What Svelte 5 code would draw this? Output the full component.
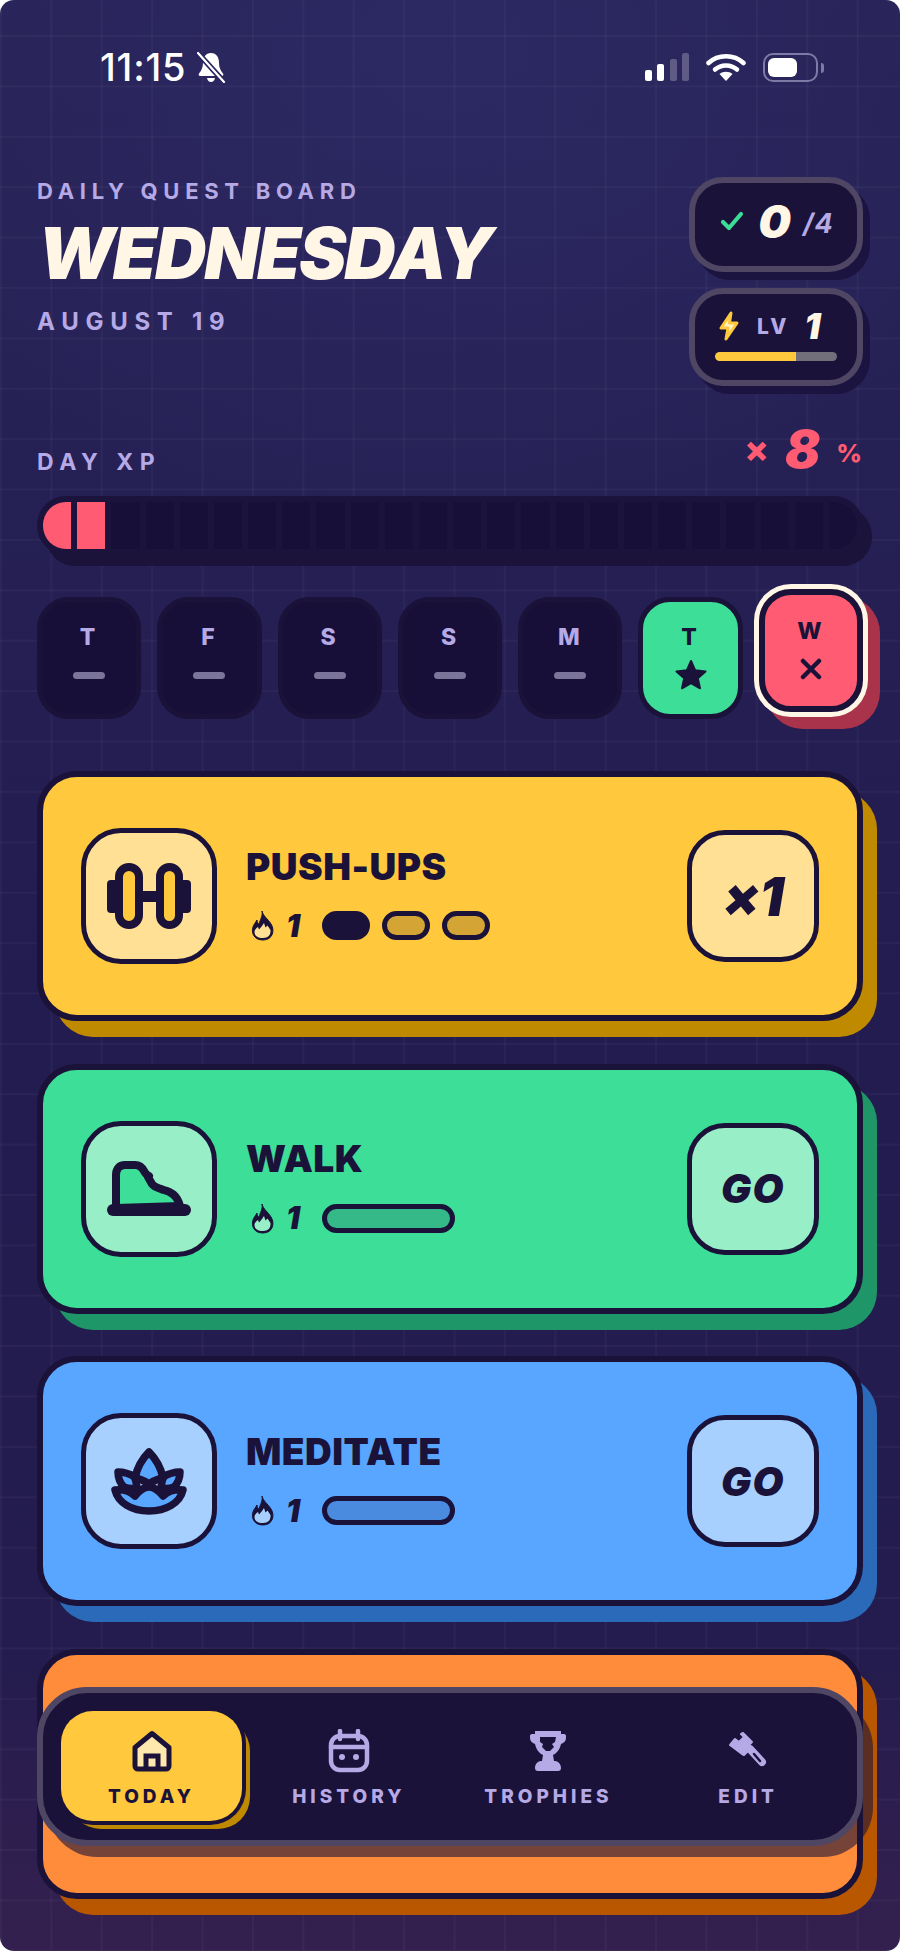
<script>
  const days = ['T', 'F', 'S', 'S', 'M'];
  const segs = Array.from({ length: 24 }, (_, i) => i);
  const quests = [
    { name: 'PUSH-UPS', cls: 'yellow', action: '×1', pills: [true, false, false], icon: 'dumbbell' },
    { name: 'WALK', cls: 'green', action: 'GO', pills: null, icon: 'shoe' },
    { name: 'MEDITATE', cls: 'blue', action: 'GO', pills: null, icon: 'lotus' }
  ];
</script>

<div class="screen">
  <div class="status">
    <div class="time-wrap">
      <span class="time">11:15</span>
      <svg class="bell" viewBox="0 0 30 32" width="30" height="32">
        <path d="M15 2c-5.500 0-8 4.500-8 9.500 0 5-1.500 8-4 11-.8 1-.2 2.500 1.200 2.500h21.600c1.400 0 2-1.500 1.200-2.500-2.500-3-4-6-4-11C23 6.500 20.500 2 15 2z" fill="#fff"/>
        <path d="M11 27c.5 2.500 2 4 4 4s3.500-1.500 4-4z" fill="#fff"/>
        <path d="M2 2l26 29" stroke="#2a2660" stroke-width="5.500"/>
        <path d="M2 2l26 29" stroke="#fff" stroke-width="2.200" stroke-linecap="round"/>
      </svg>
    </div>
    <div class="indicators">
      <svg width="44" height="28" viewBox="0 0 44 28">
        <rect x="0" y="17" width="7" height="11" rx="2" fill="#fff"/>
        <rect x="12" y="11" width="7" height="17" rx="2" fill="#fff"/>
        <rect x="25" y="6" width="7" height="22" rx="2" fill="#5f5b85"/>
        <rect x="37" y="0" width="7" height="28" rx="2" fill="#5f5b85"/>
      </svg>
      <svg width="40" height="28" viewBox="0 0 40 28">
        <path d="M2.500 10C12 1 28 1 37.500 10" fill="none" stroke="#fff" stroke-width="4.500" stroke-linecap="round"/>
        <path d="M9 16.500c6-5.500 16-5.500 22 0" fill="none" stroke="#fff" stroke-width="4.500" stroke-linecap="round"/>
        <path d="M20 28l-6.500-7c3.500-3 9.500-3 13 0z" fill="#fff"/>
      </svg>
      <div class="battery"><div class="battery-fill"></div></div>
      <div class="battery-tip"></div>
    </div>
  </div>

  <header class="header">
    <div class="heading">
      <div class="kicker">DAILY QUEST BOARD</div>
      <h1>WEDNESDAY</h1>
      <div class="date">AUGUST 19</div>
    </div>
    <div class="stats">
      <div class="stat stat-count">
        <svg width="24" height="20" viewBox="0 0 24 20"><path d="M3 11l6 6L21 3" fill="none" stroke="#3ddc97" stroke-width="4.200" stroke-linecap="round" stroke-linejoin="round"/></svg>
        <span class="big">0</span>
        <span class="of">/4</span>
      </div>
      <div class="stat stat-level">
        <div class="level-row">
          <svg width="22" height="30" viewBox="0 0 22 30"><path d="M13 2L3 17h7l-2 11 11-16h-7.500z" fill="#fff3c4" stroke="#ffc83d" stroke-width="3" stroke-linejoin="round"/></svg>
          <span class="lv">LV</span>
          <span class="big one">1</span>
        </div>
        <div class="level-bar"><div class="level-fill"></div></div>
      </div>
    </div>
  </header>

  <section class="xp">
    <div class="xp-head">
      <span class="xp-label">DAY XP</span>
      <span class="xp-value"><span class="x">×</span><span class="eight">8</span><span class="pct">%</span></span>
    </div>
    <div class="xp-bar">
      <div class="xp-track">
        {#each segs as s}
          <div class="seg" class:on={s < 2}></div>
        {/each}
      </div>
    </div>
  </section>

  <section class="week">
    {#each days as d}
      <div class="tile">
        <span class="letter">{d}</span>
        <span class="dash"></span>
      </div>
    {/each}
    <div class="tile tile-done">
      <span class="letter">T</span>
      <svg width="34" height="33" viewBox="0 0 34 33"><path d="M17 3l4.200 9.300 10.300 1.100-7.700 6.900 2.200 10L17 25.200 8 30.300l2.200-10-7.700-6.900 10.300-1.100z" fill="#1a1238" stroke="#1a1238" stroke-width="2" stroke-linejoin="round"/></svg>
    </div>
    <div class="tile tile-today">
      <span class="letter">W</span>
      <svg width="22" height="22" viewBox="0 0 22 22"><path d="M3 3l16 16M19 3L3 19" stroke="#1a1238" stroke-width="4.500" stroke-linecap="round"/></svg>
    </div>
  </section>

  <section class="cards">
    {#each quests as q}
      <article class="card {q.cls}">
        <div class="icon-box">
          {#if q.icon === 'dumbbell'}
            <svg width="84" height="66" viewBox="0 0 84 66" stroke="#1a1238" stroke-width="8" stroke-linejoin="round">
              <rect class="hole" x="12" y="4" width="20" height="58" rx="10"/>
              <rect class="hole" x="53" y="4" width="19" height="58" rx="9.500"/>
              <path d="M36 33.500h13" stroke-width="11" fill="none"/>
              <path d="M8 17H4a4 4 0 0 0-4 4v25a4 4 0 0 0 4 4h4zM76 17h4a4 4 0 0 1 4 4v25a4 4 0 0 1-4 4h-4z" fill="#1a1238" stroke="none"/>
            </svg>
          {:else if q.icon === 'shoe'}
            <svg width="84" height="55" viewBox="0 0 84 55" stroke="#1a1238" stroke-linecap="round" stroke-linejoin="round">
              <path class="hole" d="M9 47V14C9 8 12 4 18 4h10c4 0 7 2 9 6l2 3 3 2-1 1 4 7c2 3 6 4 12 6 7 2 13 5 16 16z" stroke-width="8"/>
              <path d="M6 49h72" stroke-width="12" fill="none"/>
            </svg>
          {:else}
            <svg width="76" height="67" viewBox="0 0 76 67" stroke="#1a1238" stroke-width="7.500" stroke-linecap="round" stroke-linejoin="round">
              <path class="hole" d="M24 29c-5-3-11-5-17-5 0 6 2 11 6 15 5 2 10 2 13 0z"/>
              <path class="hole" d="M52 29c5-3 11-5 17-5 0 6-2 11-6 15-5 2-10 2-13 0z"/>
              <path class="hole" d="M38 4c-6 6-12 16-14 26 6 1 10 3 14 6 4-3 8-5 14-6-2-10-8-20-14-26z"/>
              <path class="hole" d="M4 42c9-1 15 1 20 6 4-5 8-9 14-9s10 4 14 9c5-5 11-7 20-6-3 13-17 21-34 21S7 55 4 42z"/>
            </svg>
          {/if}
        </div>
        <div class="body">
          <h2>{q.name}</h2>
          <div class="meta">
            <svg class="flame" width="23" height="31" viewBox="0 0 23 31">
              <path d="M11 1C12 6 17 9 20 14 24 20 22 30 12 30 3 30 0 23 2 17 3 14 5 12 6 10 6 12 7 14 8 14 9 10 12 6 11 1z" fill="#1a1238" stroke="#1a1238" stroke-width="1" stroke-linejoin="round"/>
              <path class="flame-bg" d="M3.500 22C3.500 20 5 18 7 17L8 19.500 11 16 13 13 14.500 17.500 16.500 15.500 19.500 20C20 25 17 28 12 28 7 28 3.500 26 3.500 22z"/>
            </svg>
            <span class="streak">1</span>
            {#if q.pills}
              <div class="pills">
                {#each q.pills as p}
                  <span class="pill" class:full={p}></span>
                {/each}
              </div>
            {:else}
              <span class="pill wide"></span>
            {/if}
          </div>
        </div>
        <div class="action" class:times={q.action !== 'GO'}>{q.action}</div>
      </article>
    {/each}
    <article class="card orange"></article>
  </section>

  <nav class="nav">
    <div class="tab active">
      <svg width="44" height="44" viewBox="0 0 44 44">
        <path d="M22 4.500L5 18.500V37a3 3 0 0 0 3 3h28a3 3 0 0 0 3-3V18.500z" fill="#ffe8ad" stroke="#1a1238" stroke-width="5" stroke-linejoin="round"/>
        <path d="M16 40V27h12v13" fill="none" stroke="#1a1238" stroke-width="5"/>
      </svg>
      <span>TODAY</span>
    </div>
    <div class="tab">
      <svg width="44" height="44" viewBox="0 0 44 44" fill="none" stroke="#b5a9e6" stroke-width="4.500" stroke-linecap="round">
        <rect x="4" y="7" width="36" height="34" rx="9"/>
        <path d="M4 18h36M13 2v8M31 2v8"/>
        <circle cx="15" cy="28" r="3" fill="#b5a9e6" stroke="none"/>
        <circle cx="29" cy="28" r="3" fill="#b5a9e6" stroke="none"/>
      </svg>
      <span>HISTORY</span>
    </div>
    <div class="tab">
      <svg width="44" height="44" viewBox="-4 -2 44 44">
        <path d="M5 0h26v3h3c1.500 0 2 1 2 2v2c0 3-2 5-5 6-1 5-4 9-8 11l1 6h1c3 0 6 3 6 7 0 2-1 3-3 3H8c-2 0-3-1-3-3 0-4 3-7 6-7h1l1-6c-4-2-7-6-8-11-3-1-5-3-5-6V5c0-1 .5-2 2-2h3z" fill="#b5a9e6"/>
        <path d="M10 6h16l-1 5-3 2 2 3-4 4h-4l-4-4 1-3-3-2z" fill="#1a1238"/>
      </svg>
      <span>TROPHIES</span>
    </div>
    <div class="tab">
      <svg width="44" height="44" viewBox="-3 -3 44 44">
        <path d="M14 1l9 9-3 3 2 3-7 7-2-1L1 13l5-6 4 3 5-5-3-3z" fill="#b5a9e6" stroke="#b5a9e6" stroke-width="2" stroke-linejoin="round"/>
        <path d="M21 17l12 13" stroke="#b5a9e6" stroke-width="8" stroke-linecap="round"/>
        <path d="M25 22l6 7" stroke="#1a1238" stroke-width="2.500" stroke-linecap="round"/>
      </svg>
      <span>EDIT</span>
    </div>
  </nav>
</div>

<style>
  :global(body) {
    margin: 0;
    background: #fff;
  }
  .screen {
    position: relative;
    width: 900px;
    height: 1951px;
    box-sizing: border-box;
    overflow: hidden;
    border-radius: 14px;
    padding: 0 37px;
    font-family: Inter, "Liberation Sans", sans-serif;
    background-color: #241d52;
    background-image:
      linear-gradient(rgba(255, 255, 255, 0.03) 2px, transparent 2px),
      linear-gradient(90deg, rgba(255, 255, 255, 0.03) 2px, transparent 2px),
      radial-gradient(ellipse 620px 500px at 440px 60px, #2c2862 0%, transparent 100%),
      linear-gradient(180deg, #282458 0%, #231c50 50%, #241c4e 85%, #34204f 100%);
    background-size: 50.4px 50.4px, 50.4px 50.4px, 100% 100%, 100% 100%;
    background-position: 0 35px, 0 0, 0 0, 0 0;
  }

  .status {
    display: flex;
    justify-content: space-between;
    align-items: center;
    height: 30px;
    padding: 52px 0 0 63px;
    box-sizing: content-box;
    color: #fff;
  }
  .time-wrap { display: flex; align-items: center; gap: 10px; }
  .time { font-size: 38px; line-height: 30px; font-weight: 500; letter-spacing: 0.8px; }
  .indicators { display: flex; align-items: center; gap: 17px; margin-right: 45px; position: relative; }
  .battery {
    width: 55px;
    height: 29px;
    box-sizing: border-box;
    border: 2.5px solid #7e7aa6;
    border-radius: 10px;
    padding: 3px;
  }
  .battery-fill { width: 29px; height: 100%; background: #fff; border-radius: 6px; }
  .battery-tip {
    position: absolute;
    right: -6px;
    top: 10px;
    width: 3px;
    height: 10px;
    background: #7e7aa6;
    border-radius: 0 3px 3px 0;
  }

  .header {
    display: flex;
    justify-content: space-between;
    margin-top: 95px;
  }
  .kicker, .date, .xp-label {
    color: #b5a9e6;
    font-weight: 700;
  }
  .kicker { font-size: 22px; line-height: 26px; letter-spacing: 5.7px; margin-top: 1px; }
  h1 {
    margin: 14px 0 0 1px;
    color: #fff6e6;
    font-size: 71px;
    line-height: 70px;
    font-weight: 900;
    font-style: italic;
    letter-spacing: -2px;
  }
  .date { font-size: 24px; line-height: 28px; letter-spacing: 6.7px; margin-top: 20px; }

  .stats {
    display: flex;
    flex-direction: column;
    gap: 16px;
    width: 174px;
  }
  .stat {
    box-sizing: border-box;
    background: #1a1238;
    border: 6px solid #4f4664;
    border-radius: 34px;
    box-shadow: 7px 8px 0 #1c1440;
  }
  .stat-count {
    height: 95px;
    display: flex;
    align-items: center;
    justify-content: center;
    gap: 14px;
    padding: 0 0 8px 2px;
  }
  .big {
    color: #fff6e6;
    font-size: 46px;
    line-height: 46px;
    font-weight: 900;
    font-style: italic;
  }
  .of {
    color: #b5a9e6;
    font-size: 27px;
    font-weight: 700;
    font-style: italic;
    letter-spacing: 1px;
    margin: 6px 0 0 -2px;
  }
  .stat-level {
    height: 98px;
    padding: 16px 20px 0;
    display: flex;
    flex-direction: column;
  }
  .level-row {
    display: flex;
    align-items: center;
    height: 32px;
    gap: 17px;
    padding-left: 3px;
  }
  .lv { color: #b5a9e6; font-size: 21px; font-weight: 800; letter-spacing: 3px; }
  .big.one { font-size: 36px; line-height: 32px; margin-left: -2px; }
  .level-bar {
    margin-top: 10px;
    height: 9px;
    border-radius: 5px;
    background: #736f7a;
    overflow: hidden;
  }
  .level-fill { width: 66%; height: 100%; background: #ffc83d; border-radius: 5px 0 0 5px; }

  .xp { margin-top: 51px; }
  .xp-head {
    display: flex;
    justify-content: space-between;
    align-items: flex-end;
    height: 42px;
  }
  .xp-label { font-size: 23px; line-height: 26px; letter-spacing: 6.5px; margin-bottom: 4px; }
  .xp-value {
    display: flex;
    align-items: baseline;
    color: #ff5c73;
    font-weight: 900;
    font-style: italic;
    padding-right: 1px;
  }
  .x { font-size: 36px; line-height: 40px; font-weight: 800; font-style: normal; margin-right: 16px; transform: translateY(-6px); }
  .eight { font-size: 52px; line-height: 40px; margin-right: 16px; }
  .pct { font-size: 25px; line-height: 40px; font-weight: 800; font-style: normal; transform: translateY(-6px); }

  .xp-bar {
    margin-top: 17px;
    height: 59px;
    box-sizing: border-box;
    padding: 6px;
    background: #1b133c;
    border-radius: 29px;
    box-shadow: 9px 11px 0 #1b1339;
  }
  .xp-track {
    display: flex;
    gap: 6px;
    height: 100%;
    border-radius: 23px;
    overflow: hidden;
  }
  .seg { flex: 1; background: #170f38; }
  .seg.on { background: #ff5c73; }

  .week {
    display: grid;
    grid-template-columns: repeat(7, 1fr);
    gap: 16px;
    margin-top: 42px;
  }
  .tile {
    box-sizing: border-box;
    height: 122px;
    border: 5px solid #1a1238;
    border-radius: 32px;
    background: #170f38;
    display: flex;
    flex-direction: column;
    align-items: center;
    padding-top: 23px;
  }
  .letter { color: #b5a9e6; font-size: 23px; line-height: 24px; font-weight: 800; letter-spacing: 3px; }
  .dash { width: 32px; height: 7px; background: #7a7599; border-radius: 4px; margin-top: 23px; }
  .tile-done { background: #3ddf98; }
  .tile-done .letter, .tile-today .letter { color: #1a1238; }
  .tile-done svg { margin-top: 9px; }
  .tile-today {
    background: #ff5c73;
    border-width: 6px;
    height: 123px;
    margin-top: -8px;
    margin-bottom: 7px;
    padding-top: 24px;
    box-shadow: 0 0 0 5px #fff6e6, 12px 12px 0 5px #a8334a;
  }
  .tile-today svg { margin-top: 15px; }

  .cards {
    display: flex;
    flex-direction: column;
    gap: 42.7px;
    margin-top: 52px;
  }
  .card {
    box-sizing: border-box;
    height: 250px;
    flex: none;
    border: 6px solid #1a1238;
    border-radius: 40px;
    display: flex;
    align-items: center;
    padding: 0 38px;
    color: #1a1238;
  }
  .yellow { background: #ffc83d; box-shadow: 16px 18px 0 -2px #c08a00; --soft: #ffe095; --trough: #d4a535; --accent: #ffc83d; }
  .green { background: #3ddf98; box-shadow: 16px 18px 0 -2px #1f9668; --soft: #98eec6; --trough: #35b988; --accent: #3ddf98; }
  .blue { background: #58a6ff; box-shadow: 16px 18px 0 -2px #2b69b9; --soft: #a7d0ff; --trough: #4a8be0; --accent: #58a6ff; }
  .orange { background: #ff8c3a; box-shadow: 16px 18px 0 -2px #b85700; }

  .hole { fill: var(--accent); }

  .icon-box {
    box-sizing: border-box;
    width: 136px;
    height: 136px;
    flex: none;
    background: var(--soft);
    border: 5px solid #1a1238;
    border-radius: 40px;
    display: flex;
    align-items: center;
    justify-content: center;
  }
  .body { flex: 1; margin-left: 29px; padding-bottom: 4px; }
  h2 {
    margin: 0;
    font-size: 37px;
    line-height: 40px;
    font-weight: 900;
    letter-spacing: 0.5px;
  }
  .meta {
    display: flex;
    align-items: center;
    margin: 23px 0 0 5px;
    height: 32px;
  }
  .flame-bg { fill: var(--soft); }
  .streak { font-size: 31px; line-height: 32px; font-weight: 900; font-style: italic; margin-left: 12px; width: 36px; }
  .pills { display: flex; gap: 12px; }
  .pill {
    box-sizing: border-box;
    display: block;
    width: 48px;
    height: 29px;
    background: var(--trough);
    border: 5px solid #1a1238;
    border-radius: 15px;
  }
  .pill.full { background: #1a1238; }
  .pill.wide { width: 133px; }

  .action {
    box-sizing: border-box;
    width: 132px;
    height: 132px;
    flex: none;
    background: var(--soft);
    border: 5px solid #1a1238;
    border-radius: 38px;
    display: flex;
    align-items: center;
    justify-content: center;
    font-size: 40px;
    font-weight: 900;
    font-style: italic;
    letter-spacing: 1.5px;
  }
  .action.times { font-size: 54px; letter-spacing: -1px; }

  .nav {
    position: absolute;
    left: 37px;
    top: 1687px;
    box-sizing: border-box;
    width: 826px;
    height: 159px;
    background: #1a1238;
    border: 6px solid #4f4664;
    border-radius: 50px;
    box-shadow: 10px 11px 0 rgba(26, 18, 56, 0.6);
    display: grid;
    grid-template-columns: 181px repeat(3, 1fr);
    column-gap: 14px;
    padding: 18px 16px 0 18px;
    align-items: start;
  }
  .tab {
    height: 110px;
    display: flex;
    flex-direction: column;
    align-items: center;
    padding-top: 18px;
    box-sizing: border-box;
    color: #b5a9e6;
    font-size: 19px;
    line-height: 20px;
    font-weight: 800;
    letter-spacing: 4px;
    gap: 14px;
  }
  .tab.active {
    background: #ffc83d;
    color: #1a1238;
    border-radius: 32px;
    box-shadow: 0 0 0 4px #1a1238, 8px 8px 0 0 #c08a00;
  }
</style>
